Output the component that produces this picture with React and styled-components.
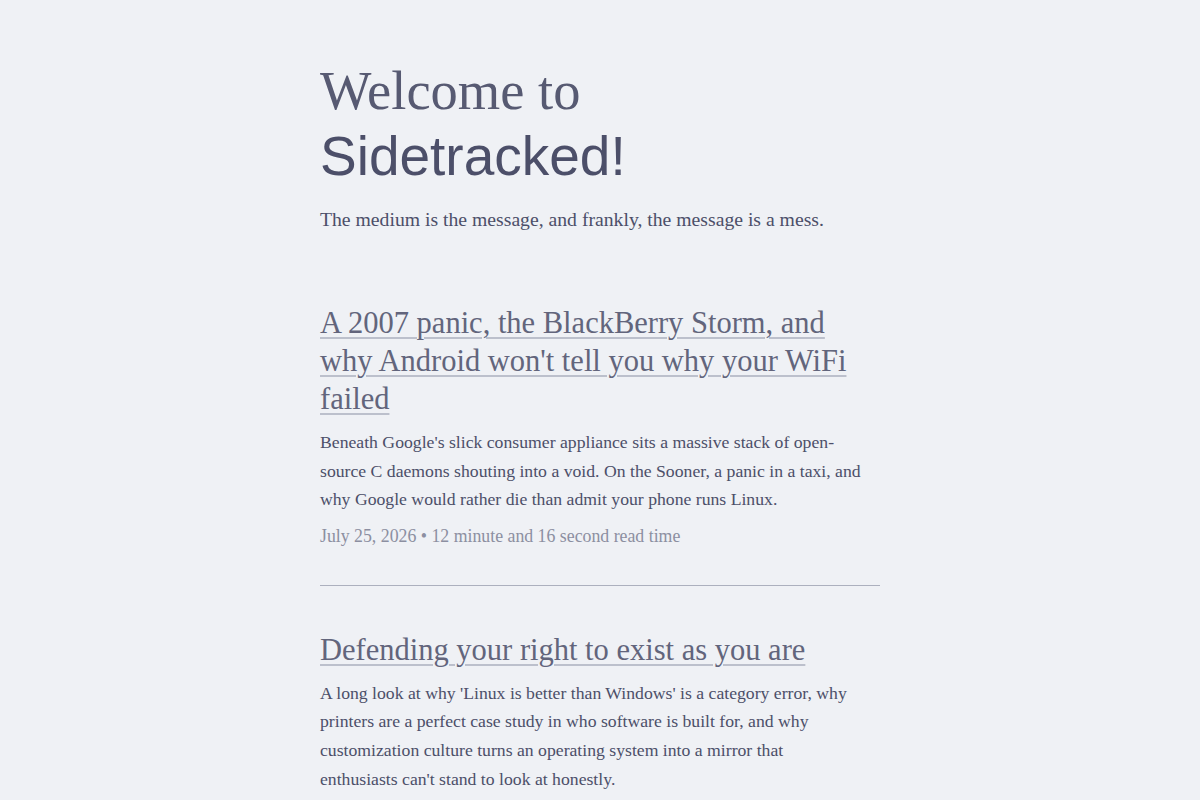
import React from "react";
import styled, { createGlobalStyle } from "styled-components";

const Global = createGlobalStyle`
  html, body { margin: 0; padding: 0; background: #eff1f5; }
  body { color: #4c4f69; font-family: "Liberation Serif", serif; }
`;

const Main = styled.main`
  width: 560px;
  margin: 0 auto;
  padding-top: 58px;
`;

const Hero = styled.header`
  margin-bottom: 70px;
`;

const Welcome = styled.h1`
  margin: 0;
  font-weight: 400;
  color: #4c4f69;
`;

const WelcomeLine = styled.span`
  display: block;
  font-family: "Liberation Serif", serif;
  font-size: 54.5px;
  line-height: 66px;
  font-weight: 400;
  color: #575a72;
`;

const BrandLine = styled.span`
  display: block;
  font-family: "Liberation Sans", Arial, sans-serif;
  font-size: 55px;
  line-height: 64px;
  font-weight: 400;
`;

const Tagline = styled.p`
  margin: 16px 0 0;
  font-size: 19.7px;
  line-height: 30px;
  color: #4c4f69;
`;

const Post = styled.article`
  padding: 0 0 36px;
  border-bottom: ${(p) => (p.$last ? "none" : "1px solid #acb0be")};
  margin-bottom: 45px;
`;

const PostTitle = styled.h2`
  margin: 0 0 10px;
  font-weight: 400;
  font-size: 30.5px;
  line-height: 38px;
`;

const TitleLink = styled.a`
  color: #62657c;
  text-decoration: underline;
  text-decoration-color: #bcc0cc;
  text-decoration-thickness: 2px;
  text-underline-offset: 4px;
`;

const Summary = styled.p`
  max-width: 543px;
  margin: 0 0 9px;
  font-size: 17.7px;
  line-height: 28.6px;
  color: #4c4f69;
`;

const Meta = styled.p`
  margin: 0;
  font-size: 17.8px;
  line-height: 26px;
  color: #8c8fa1;
`;

const posts = [
  {
    title:
      "A 2007 panic, the BlackBerry Storm, and why Android won't tell you why your WiFi failed",
    summary:
      "Beneath Google's slick consumer appliance sits a massive stack of open-source C daemons shouting into a void. On the Sooner, a panic in a taxi, and why Google would rather die than admit your phone runs Linux.",
    meta: "July 25, 2026 \u2022 12 minute and 16 second read time",
  },
  {
    title: "Defending your right to exist as you are",
    summary:
      "A long look at why 'Linux is better than Windows' is a category error, why printers are a perfect case study in who software is built for, and why customization culture turns an operating system into a mirror that enthusiasts can't stand to look at honestly.",
    meta: "July 18, 2026 \u2022 24 minute and 3 second read time",
  },
];

export default function App() {
  return (
    <>
      <Global />
      <Main>
        <Hero>
          <Welcome>
            <WelcomeLine>Welcome to</WelcomeLine>
            <BrandLine>Sidetracked!</BrandLine>
          </Welcome>
          <Tagline>The medium is the message, and frankly, the message is a mess.</Tagline>
        </Hero>
        {posts.map((p, i) => (
          <Post key={i} $last={i === posts.length - 1}>
            <PostTitle>
              <TitleLink href="#">{p.title}</TitleLink>
            </PostTitle>
            <Summary>{p.summary}</Summary>
            <Meta>{p.meta}</Meta>
          </Post>
        ))}
      </Main>
    </>
  );
}
